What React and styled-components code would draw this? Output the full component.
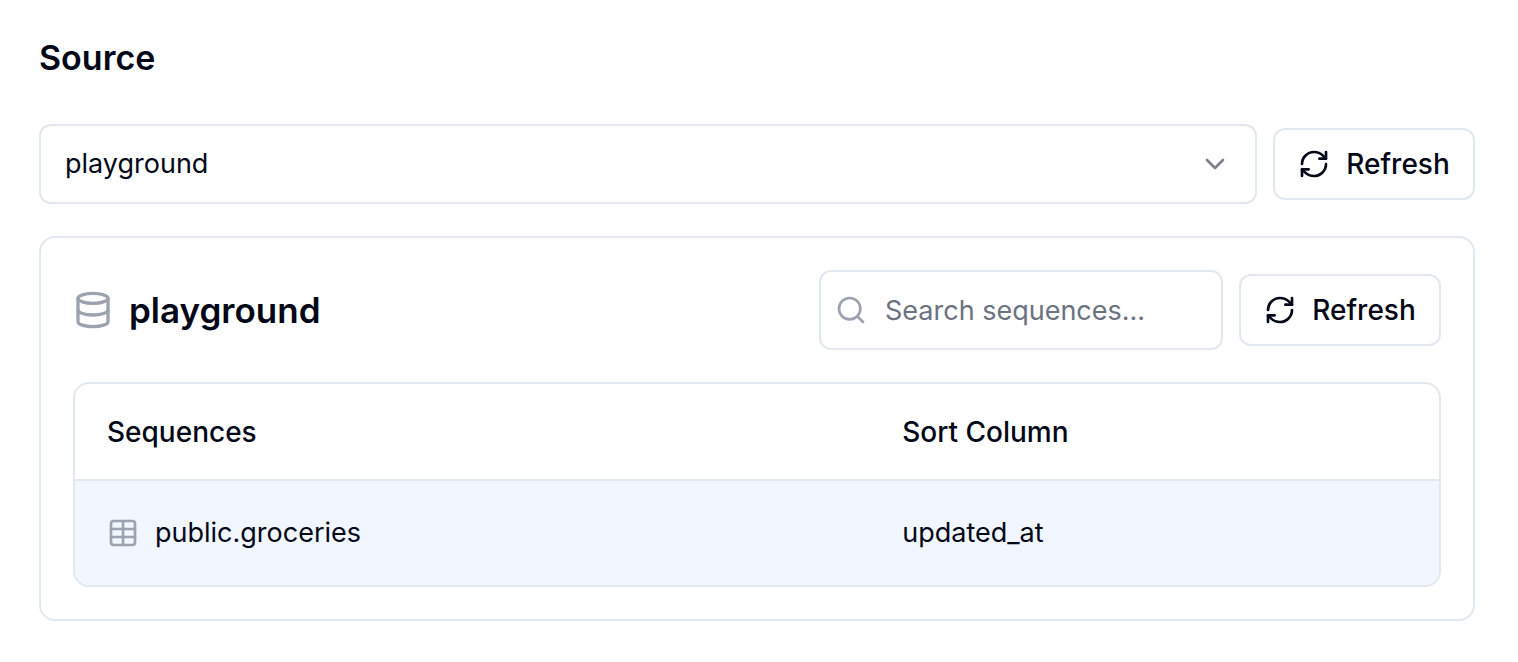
import React from "react";
import styled, { createGlobalStyle } from "styled-components";
import { ChevronDown, Database, RefreshCw, Search, Table } from "lucide-react";

const border = "#e2e8f0";
const ink = "#020817";
const muted = "#9ca3af";

const GlobalStyle = createGlobalStyle`
  *, *::before, *::after { box-sizing: border-box; }
  body {
    margin: 0;
    background: #fff;
    color: ${ink};
    font-family: Inter, "Liberation Sans", sans-serif;
    font-size: 27px;
    line-height: 40px;
    -webkit-font-smoothing: antialiased;
  }
  button, input, select { font: inherit; color: inherit; }
  svg { display: block; flex: none; }
`;

const Page = styled.main`
  padding: 38px 43px 40px 39px;
`;

const Title = styled.h2`
  margin: 0 0 46px;
  font-size: 34px;
  font-weight: 600;
  line-height: 40px;
`;

const SourceRow = styled.div`
  display: flex;
  align-items: center;
  gap: 16px;
  margin-bottom: 32px;
`;

const SelectField = styled.div`
  flex: 1;
  display: grid;
  align-items: center;
  height: 80px;
  border: 2px solid ${border};
  border-radius: 12px;

  > * { grid-area: 1 / 1; }
  > svg {
    justify-self: end;
    margin-right: 24px;
    opacity: 0.5;
    pointer-events: none;
  }
`;

const Select = styled.select`
  width: 100%;
  height: 100%;
  padding: 0 64px 0 24px;
  border: 0;
  border-radius: 12px;
  background: transparent;
  appearance: none;
`;

const Button = styled.button`
  display: inline-flex;
  align-items: center;
  justify-content: center;
  gap: 16px;
  width: 202px;
  height: 72px;
  padding: 0;
  border: 2px solid ${border};
  border-radius: 12px;
  background: #fff;
  font-size: 28px;
  font-weight: 500;
`;

const Card = styled.section`
  padding: 32px;
  border: 2px solid ${border};
  border-radius: 16px;
`;

const CardHeader = styled.header`
  display: flex;
  align-items: center;
  justify-content: space-between;
  margin-bottom: 32px;
`;

const CardTitle = styled.h3`
  display: flex;
  align-items: center;
  gap: 16px;
  margin: 0;
  font-size: 35px;
  font-weight: 600;

  svg { color: ${muted}; }
`;

const Tools = styled.div`
  display: flex;
  align-items: center;
  gap: 16px;
`;

const SearchField = styled.div`
  display: flex;
  align-items: center;
  gap: 18px;
  width: 404px;
  height: 80px;
  padding: 0 14px;
  border: 2px solid ${border};
  border-radius: 12px;

  svg { color: ${muted}; }
`;

const SearchInput = styled.input`
  flex: 1;
  min-width: 0;
  padding: 2px 0 0;
  border: 0;
  outline: 0;
  background: transparent;

  &::placeholder { color: #6b7280; opacity: 1; }
`;

const TableFrame = styled.div`
  overflow: hidden;
  border: 2px solid ${border};
  border-radius: 16px;
`;

const DataTable = styled.table`
  width: 100%;
  border-collapse: separate;
  border-spacing: 0;
  table-layout: fixed;
  text-align: left;
`;

const HeadCell = styled.th`
  width: ${(p) => p.$width || "auto"};
  height: 97px;
  padding: 0 32px;
  border-bottom: 2px solid ${border};
  font-size: 28px;
  font-weight: 500;
`;

const Cell = styled.td`
  height: 104px;
  padding: 0 32px;
  background: #f1f6ff;
`;

const SequenceName = styled.div`
  display: flex;
  align-items: center;
  gap: 16px;

  svg { color: ${muted}; }
`;

const sequences = [{ name: "public.groceries", sort: "updated_at" }];

function RefreshButton() {
  return (
    <Button type="button">
      <RefreshCw size={32} aria-hidden="true" />
      Refresh
    </Button>
  );
}

export default function App() {
  return (
    <>
      <GlobalStyle />
      <Page>
        <Title>Source</Title>
        <SourceRow>
          <SelectField>
            <Select aria-label="Source database" defaultValue="playground">
              <option value="playground">playground</option>
            </Select>
            <ChevronDown size={32} aria-hidden="true" />
          </SelectField>
          <RefreshButton />
        </SourceRow>
        <Card>
          <CardHeader>
            <CardTitle>
              <Database size={40} aria-hidden="true" />
              playground
            </CardTitle>
            <Tools>
              <SearchField>
                <Search size={32} aria-hidden="true" />
                <SearchInput
                  type="text"
                  aria-label="Search sequences"
                  placeholder="Search sequences..."
                />
              </SearchField>
              <RefreshButton />
            </Tools>
          </CardHeader>
          <TableFrame>
            <DataTable>
              <thead>
                <tr>
                  <HeadCell scope="col" $width="58.3%">Sequences</HeadCell>
                  <HeadCell scope="col">Sort Column</HeadCell>
                </tr>
              </thead>
              <tbody>
                {sequences.map((s) => (
                  <tr key={s.name}>
                    <Cell>
                      <SequenceName>
                        <Table size={32} aria-hidden="true" />
                        {s.name}
                      </SequenceName>
                    </Cell>
                    <Cell>{s.sort}</Cell>
                  </tr>
                ))}
              </tbody>
            </DataTable>
          </TableFrame>
        </Card>
      </Page>
    </>
  );
}
